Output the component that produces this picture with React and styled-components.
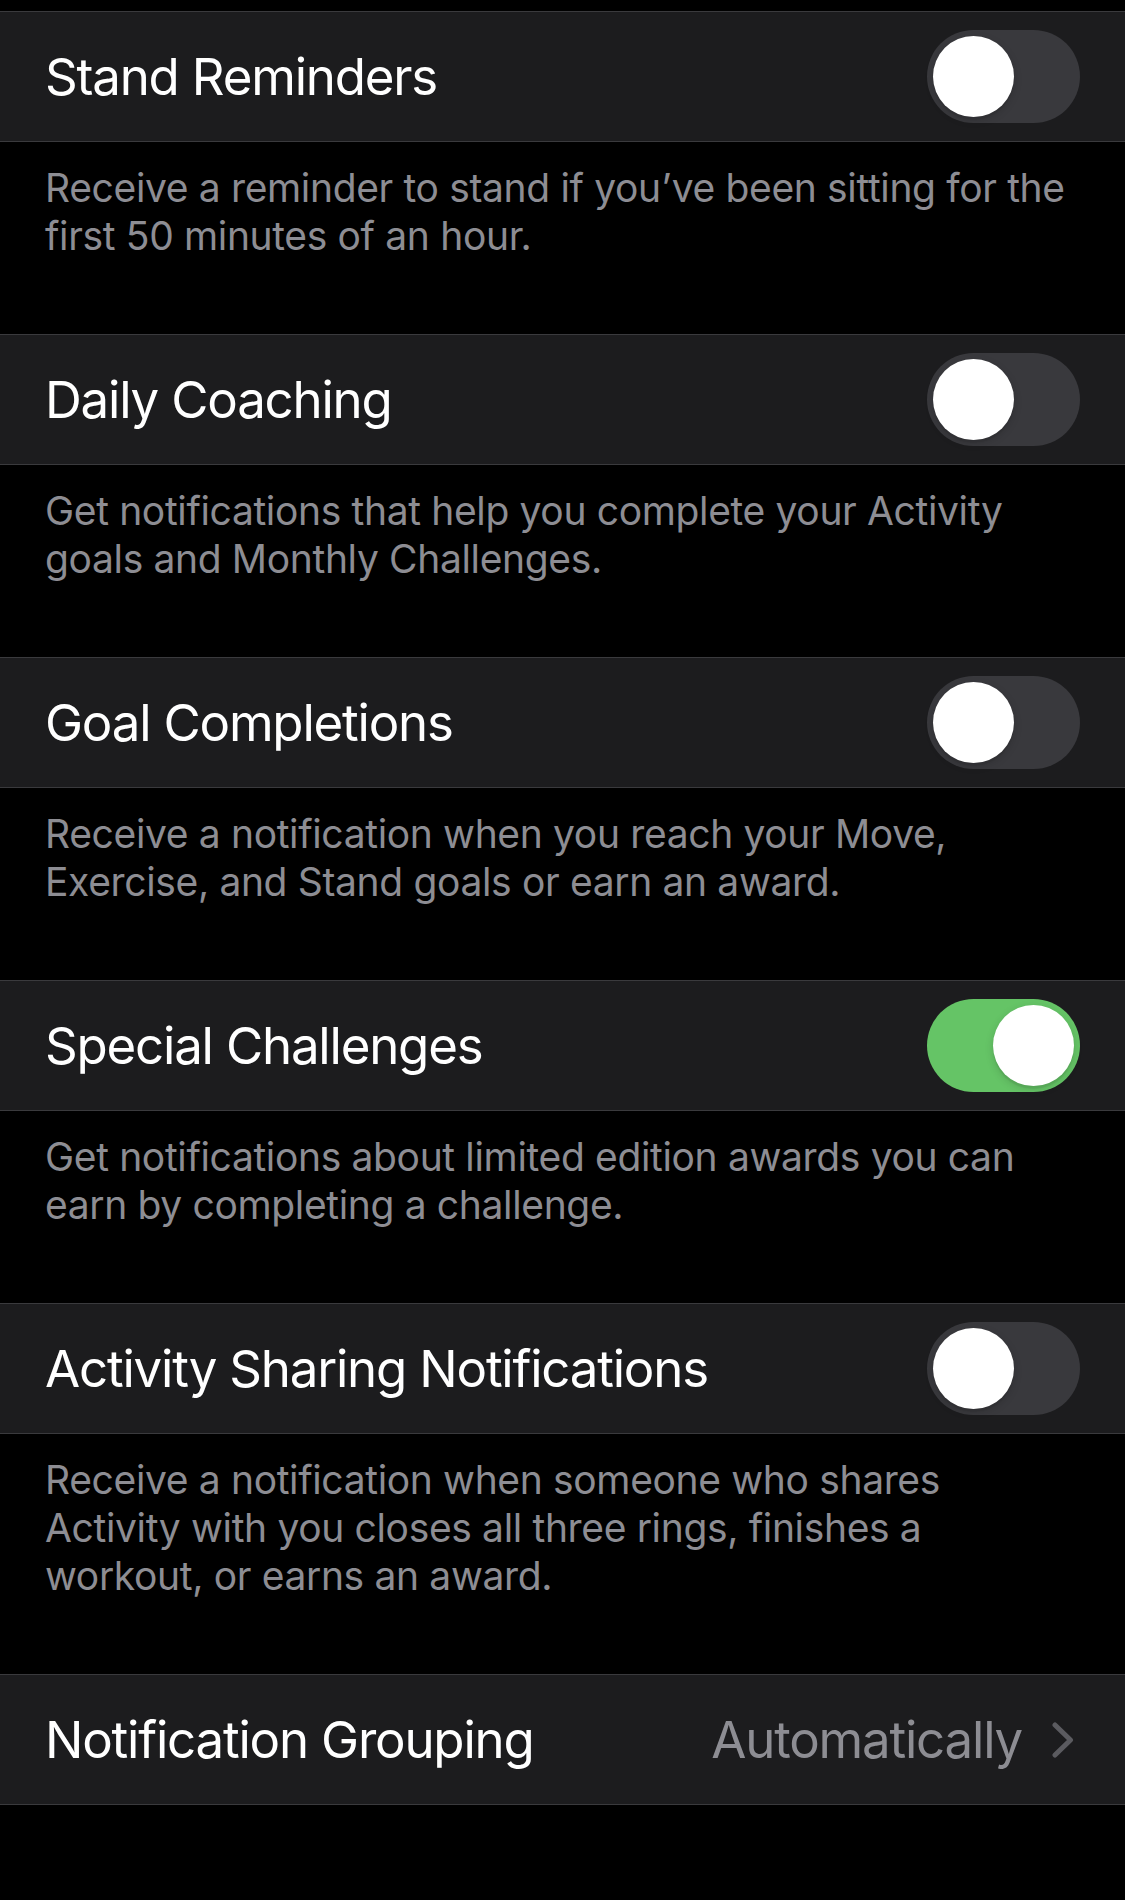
import React from 'react';
import styled, { createGlobalStyle } from 'styled-components';

const GlobalStyle = createGlobalStyle`
  html, body {
    margin: 0;
    padding: 0;
    background: #000;
  }

  body {
    font-family: Inter, "Noto Sans", "Liberation Sans", sans-serif;
    -webkit-font-smoothing: antialiased;
  }
`;

const Page = styled.div`
  min-height: 1900px;
  padding-top: 11px;
  background: #000;
  box-sizing: border-box;
`;

const Row = styled.div`
  display: flex;
  align-items: center;
  justify-content: space-between;
  height: 131px;
  padding: 0 45px 0 45px;
  box-sizing: border-box;
  background: #1c1c1e;
  border-top: 1px solid #3a3a3d;
  border-bottom: 1px solid #3a3a3d;
`;

const Title = styled.span`
  font-size: 51px;
  color: #fff;
  letter-spacing: -1.2px;
  white-space: nowrap;
`;

const Footer = styled.div`
  height: ${(p) => p.lines * 48 + 96}px;
  padding: 22px 40px 0 45px;
  box-sizing: border-box;
  font-size: 39px;
  line-height: 48px;
  color: #8d8d93;
  letter-spacing: -0.35px;
`;

const Line = styled.div`
  white-space: nowrap;
`;

const Track = styled.button.attrs({ type: 'button' })`
  position: relative;
  flex: none;
  width: 153px;
  height: 93px;
  padding: 0;
  border: 0;
  border-radius: 47px;
  background: ${(p) => (p.on ? '#65c466' : '#39393d')};
  cursor: pointer;
`;

const Knob = styled.span`
  position: absolute;
  top: 6px;
  left: ${(p) => (p.on ? '66px' : '6px')};
  width: 81px;
  height: 81px;
  border-radius: 50%;
  background: #fff;
  box-shadow: 0 3px 8px rgba(0, 0, 0, 0.15), 0 3px 1px rgba(0, 0, 0, 0.06);
`;

const Value = styled.div`
  display: flex;
  align-items: center;
  gap: 30px;
  margin-right: 6px;
`;

const ValueText = styled.span`
  font-size: 51px;
  color: #8d8d93;
  letter-spacing: -1.2px;
`;

const Chevron = () => (
  <svg width="22" height="36" viewBox="0 0 22 36" fill="none">
    <path
      d="M3 3 L18.5 18 L3 33"
      stroke="#5b5b60"
      strokeWidth="5"
      strokeLinecap="round"
      strokeLinejoin="round"
    />
  </svg>
);

const Toggle = ({ on }) => (
  <Track on={on ? 1 : 0} aria-pressed={on}>
    <Knob on={on ? 1 : 0} />
  </Track>
);

const settings = [
  {
    title: 'Stand Reminders',
    on: false,
    lines: [
      'Receive a reminder to stand if you’ve been sitting for the',
      'first 50 minutes of an hour.',
    ],
  },
  {
    title: 'Daily Coaching',
    on: false,
    lines: [
      'Get notifications that help you complete your Activity',
      'goals and Monthly Challenges.',
    ],
  },
  {
    title: 'Goal Completions',
    on: false,
    lines: [
      'Receive a notification when you reach your Move,',
      'Exercise, and Stand goals or earn an award.',
    ],
  },
  {
    title: 'Special Challenges',
    on: true,
    lines: [
      'Get notifications about limited edition awards you can',
      'earn by completing a challenge.',
    ],
  },
  {
    title: 'Activity Sharing Notifications',
    on: false,
    lines: [
      'Receive a notification when someone who shares',
      'Activity with you closes all three rings, finishes a',
      'workout, or earns an award.',
    ],
  },
];

export default function App() {
  return (
    <>
      <GlobalStyle />
      <Page>
        {settings.map((s) => (
          <React.Fragment key={s.title}>
            <Row>
              <Title>{s.title}</Title>
              <Toggle on={s.on} />
            </Row>
            <Footer lines={s.lines.length}>
              {s.lines.map((l) => (
                <Line key={l}>{l}</Line>
              ))}
            </Footer>
          </React.Fragment>
        ))}
        <Row>
          <Title>Notification Grouping</Title>
          <Value>
            <ValueText>Automatically</ValueText>
            <Chevron />
          </Value>
        </Row>
      </Page>
    </>
  );
}
